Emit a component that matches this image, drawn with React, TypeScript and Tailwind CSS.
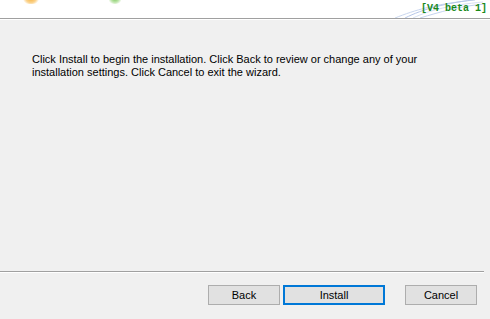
import React from "react";

export default function App() {
  const font = { fontFamily: '"Liberation Sans", Arial, sans-serif' };
  return (
    <div className="w-[490px] h-[319px] bg-[#f0f0f0] flex flex-col overflow-hidden" style={font}>
      {/* header */}
      <div className="relative h-[18px] bg-white shrink-0">
        <div className="absolute left-[22px] top-[-10px] w-[18px] h-[14px] rounded-full bg-[radial-gradient(circle,#f5a623_0%,#fbd38d_50%,rgba(255,255,255,0)_75%)]" />
        <div className="absolute left-[108px] top-[-8px] w-[14px] h-[12px] rounded-full bg-[radial-gradient(circle,#6cc24a_0%,#c6e8b5_50%,rgba(255,255,255,0)_75%)]" />
        <svg className="absolute left-[385px] top-0" width="100" height="18" viewBox="0 0 100 18">
          <path d="M10 18 C 30 10, 50 4, 90 0" stroke="#c9d6ee" strokeWidth="1" fill="none" />
          <path d="M20 18 C 38 9, 60 3, 95 -1" stroke="#b5c6e8" strokeWidth="1" fill="none" />
          <path d="M28 18 C 45 10, 66 5, 98 2" stroke="#d6e0f2" strokeWidth="1" fill="none" />
          <path d="M35 18 C 55 12, 75 6, 100 4" stroke="#c4d2ee" strokeWidth="1" fill="none" />
        </svg>
        <div
          className="absolute right-[3px] top-[3px] text-[10px] leading-[12px] font-bold text-[#1a8a1a]"
          style={{ fontFamily: '"Liberation Mono", monospace' }}
        >
          [V4 beta 1]
        </div>
      </div>
      <div className="h-px bg-[#a0a0a0] shrink-0" />
      <div className="h-px bg-white shrink-0" />

      {/* body */}
      <div className="flex-1 pl-[32px] pt-[33px] text-[11px] leading-[13px] text-black">
        <p>Click Install to begin the installation. Click Back to review or change any of your</p>
        <p>installation settings. Click Cancel to exit the wizard.</p>
      </div>

      {/* separator */}
      <div className="h-px bg-[#a0a0a0] mr-[6px] shrink-0" />
      <div className="h-px bg-white mr-[6px] shrink-0" />

      {/* buttons */}
      <div className="h-[46px] shrink-0 flex items-start pt-[12px] pl-[208px] text-[11px]">
        <button className="w-[72px] h-[20px] bg-[#e1e1e1] border border-[#adadad] text-black leading-none">Back</button>
        <button className="ml-[3px] w-[102px] h-[20px] bg-[#e1e1e1] border-2 border-[#0078d7] text-black leading-none">Install</button>
        <button className="ml-[20px] w-[72px] h-[20px] bg-[#e1e1e1] border border-[#adadad] text-black leading-none">Cancel</button>
      </div>
    </div>
  );
}
